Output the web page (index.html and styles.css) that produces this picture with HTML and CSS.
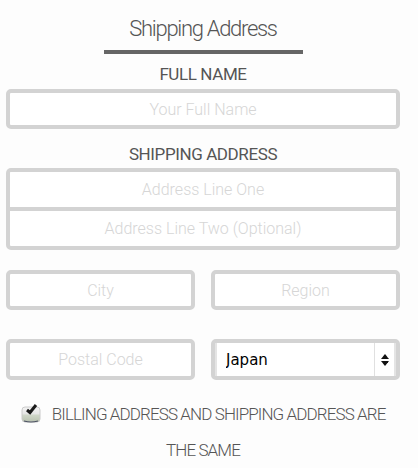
FILE: index.html
```html
<!DOCTYPE html>
<html lang="en">
<head>
  <meta charset="UTF-8">
  <title>Shipping Address</title>
  <link rel="stylesheet" href="styles.css">
</head>
<body>
  <form class="address-form">
    <h1 class="title">Shipping Address</h1>
    <div class="rule"></div>

    <label class="label" for="fullName">FULL NAME</label>
    <input class="field" type="text" id="fullName" placeholder="Your Full Name">

    <label class="label" for="line1">SHIPPING ADDRESS</label>
    <div class="group">
      <input class="field first" type="text" id="line1" placeholder="Address Line One">
      <input class="field last" type="text" id="line2" placeholder="Address Line Two (Optional)">
    </div>

    <div class="row">
      <input class="field" type="text" placeholder="City">
      <input class="field" type="text" placeholder="Region">
    </div>

    <div class="row row-gap">
      <input class="field" type="text" placeholder="Postal Code">
      <div class="select-wrap">
        <select class="country">
          <option>Japan</option>
          <option>China</option>
          <option>Korea</option>
        </select>
        <span class="arrows">
          <svg width="10" height="16" viewBox="0 0 10 16">
            <path d="M1 7 L5 2 L9 7 Z" fill="#111"/>
            <path d="M1 9 L5 14 L9 9 Z" fill="#111"/>
          </svg>
        </span>
      </div>
    </div>

    <label class="same">
      <svg class="check" width="20" height="20" viewBox="0 0 20 20">
        <defs>
          <linearGradient id="box" x1="0" y1="0" x2="0" y2="1">
            <stop offset="0" stop-color="#f4f4f4"/>
            <stop offset="0.45" stop-color="#e6e6e6"/>
            <stop offset="0.55" stop-color="#cfd6c8"/>
            <stop offset="1" stop-color="#b9c2b0"/>
          </linearGradient>
        </defs>
        <rect x="1" y="4" width="18" height="15" rx="3" fill="url(#box)" stroke="#cacaca"/>
        <path d="M3 18 Q10 20 17 18" stroke="#4a5060" stroke-width="1.2" fill="none"/>
        <path d="M6 7 L9 9.5 L15 2" stroke="#1a1a1a" stroke-width="3" fill="none"/>
      </svg>
      BILLING ADDRESS AND SHIPPING ADDRESS ARE THE SAME
    </label>
  </form>
</body>
</html>
```

FILE: styles.css
```css
* { margin: 0; padding: 0; box-sizing: border-box; }
body {
  background: #fdfdfd;
  font-family: Roboto, 'Liberation Sans', sans-serif;
  color: #555;
}
.address-form {
  width: 400px;
  padding-left: 6px;
  display: flex;
  flex-direction: column;
}
.title {
  margin-top: 16px;
  font-size: 22px;
  line-height: 26px;
  font-weight: 300;
  text-align: center;
  color: #555;
  letter-spacing: -1.3px;
}
.rule {
  align-self: center;
  width: 199px;
  height: 4px;
  margin-top: 8px;
  background: #666;
}
.label {
  margin-top: 9px;
  font-size: 17px;
  line-height: 22px;
  text-align: center;
  color: #555;
  letter-spacing: -0.4px;
}
.label + .field { margin-top: 4px; }
.label + .group { margin-top: 3px; }
.field {
  display: block;
  width: 100%;
  height: 40px;
  border: 4px solid #d3d3d3;
  border-radius: 5px;
  background: #fff;
  font-family: Roboto, 'Liberation Sans', sans-serif;
  font-size: 16px;
  font-weight: 300;
  text-align: center;
  color: #555;
  outline: none;
}
.field::placeholder { color: #d6d6d6; }
.field + .label { margin-top: 14px; }
.group { display: flex; flex-direction: column; }
.group .first {
  height: 39px;
  border-bottom: none;
  border-radius: 5px 5px 0 0;
}
.group .last {
  height: 43px;
  border-radius: 0 0 5px 5px;
}
.row {
  display: grid;
  grid-template-columns: 1fr 1fr;
  gap: 16px;
  margin-top: 20px;
}
.row-gap { margin-top: 29px; }
.row-gap .field { height: 41px; }
.select-wrap {
  position: relative;
  height: 41px;
  border: 4px solid #d3d3d3;
  border-radius: 5px;
  background: #fff;
}
.country {
  appearance: none;
  -webkit-appearance: none;
  width: 100%;
  height: 100%;
  border: none;
  border-left: 2px solid #e4e4e4;
  border-right: 2px solid #e4e4e4;
  background: #fff;
  padding-left: 9px;
  font-family: 'DejaVu Sans', sans-serif;
  font-size: 15px;
  color: #000;
  outline: none;
}
.arrows {
  position: absolute;
  top: 0;
  right: 2px;
  width: 20px;
  height: 100%;
  border-left: 1px solid #e0e0e0;
  display: flex;
  align-items: center;
  justify-content: center;
  pointer-events: none;
}
.same {
  margin-top: 16px;
  padding: 0 10px;
  font-size: 17px;
  line-height: 36px;
  font-weight: 300;
  text-align: center;
  color: #555;
  letter-spacing: -0.9px;
}
.check {
  vertical-align: -3px;
  margin-right: 8px;
}
```
